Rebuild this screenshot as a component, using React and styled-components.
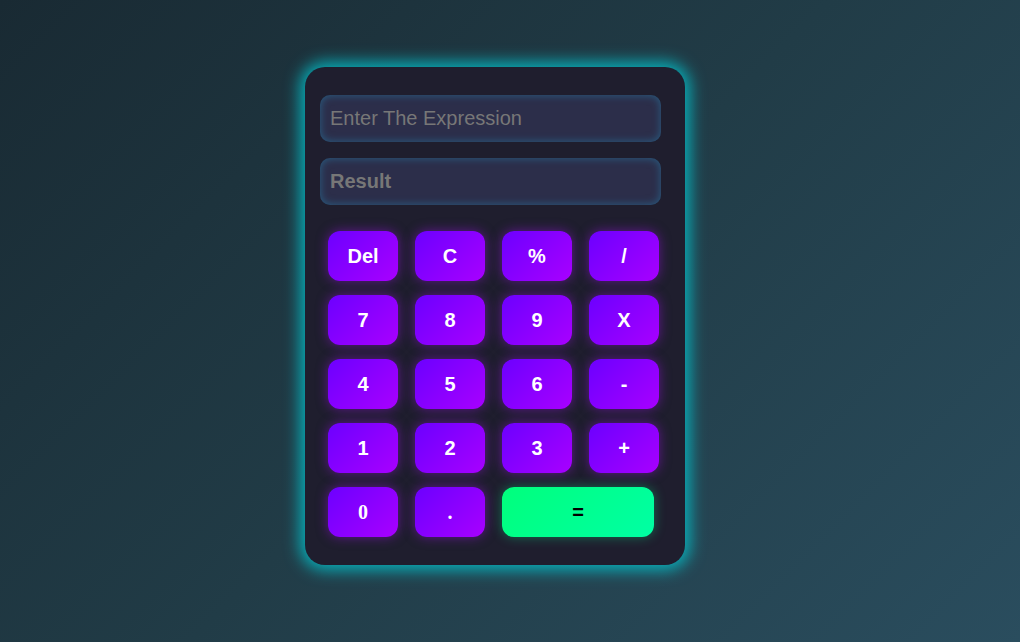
import React from 'react';
import styled, { createGlobalStyle } from 'styled-components';

const GlobalStyle = createGlobalStyle`
  html, body {
    margin: 0;
    padding: 0;
    height: 100%;
  }
  body {
    font-family: 'Liberation Sans', Arial, sans-serif;
    background: linear-gradient(135deg, #192a33 0%, #213c47 50%, #2a4d5e 100%);
    min-height: 642px;
  }
`;

const Page = styled.div`
  display: flex;
  justify-content: center;
  padding-top: 67px;
  height: 642px;
  box-sizing: border-box;
`;

const Calculator = styled.div`
  width: 380px;
  height: 498px;
  box-sizing: border-box;
  padding: 28px 15px 28px 15px;
  background: #1f1e2e;
  border-radius: 20px;
  box-shadow: 0 0 16px 5px rgba(0, 205, 215, 0.8);
  display: flex;
  flex-direction: column;
  transform: translateX(-15px);
`;

const Display = styled.input`
  width: 341px;
  height: 47px;
  box-sizing: border-box;
  border: none;
  outline: none;
  border-radius: 10px;
  background: #2c2e4a;
  box-shadow: inset 0 0 8px rgba(40, 110, 150, 0.8);
  padding: 0 10px;
  font-family: 'Liberation Sans', Arial, sans-serif;
  font-size: 20px;
  font-weight: ${p => (p.$bold ? 700 : 400)};
  color: #7a7a7a;
  margin-bottom: ${p => p.$gap}px;

  &::placeholder {
    color: #777777;
  }
`;

const Keypad = styled.div`
  display: grid;
  grid-template-columns: repeat(4, 70px);
  grid-auto-rows: 50px;
  column-gap: 17px;
  row-gap: 14px;
  padding-left: 8px;
`;

const Key = styled.button`
  border: none;
  border-radius: 12px;
  background: linear-gradient(135deg, #6c00ff 0%, #a800ff 100%);
  box-shadow: 0 0 12px rgba(150, 20, 220, 0.55);
  color: #ffffff;
  font-family: ${p => (p.$serif ? "'Liberation Serif', 'Times New Roman', serif" : "'Liberation Sans', Arial, sans-serif")};
  font-size: 20px;
  font-weight: 700;
  cursor: pointer;
  padding: 0;
`;

const EqualKey = styled(Key)`
  grid-column: span 2;
  width: 152px;
  background: linear-gradient(135deg, #00ff7c 0%, #00ffa4 100%);
  box-shadow: 0 0 12px rgba(0, 255, 150, 0.35);
  color: #000000;
`;

const rows = [
  ['Del', 'C', '%', '/'],
  ['7', '8', '9', 'X'],
  ['4', '5', '6', '-'],
  ['1', '2', '3', '+'],
];

export default function App() {
  return (
    <>
      <GlobalStyle />
      <Page>
        <Calculator>
          <Display placeholder="Enter The Expression" $gap={16} readOnly />
          <Display placeholder="Result" $bold $gap={26} readOnly />
          <Keypad>
            {rows.flat().map(k => (
              <Key key={k}>{k}</Key>
            ))}
            <Key $serif>0</Key>
            <Key $serif>.</Key>
            <EqualKey>=</EqualKey>
          </Keypad>
        </Calculator>
      </Page>
    </>
  );
}
